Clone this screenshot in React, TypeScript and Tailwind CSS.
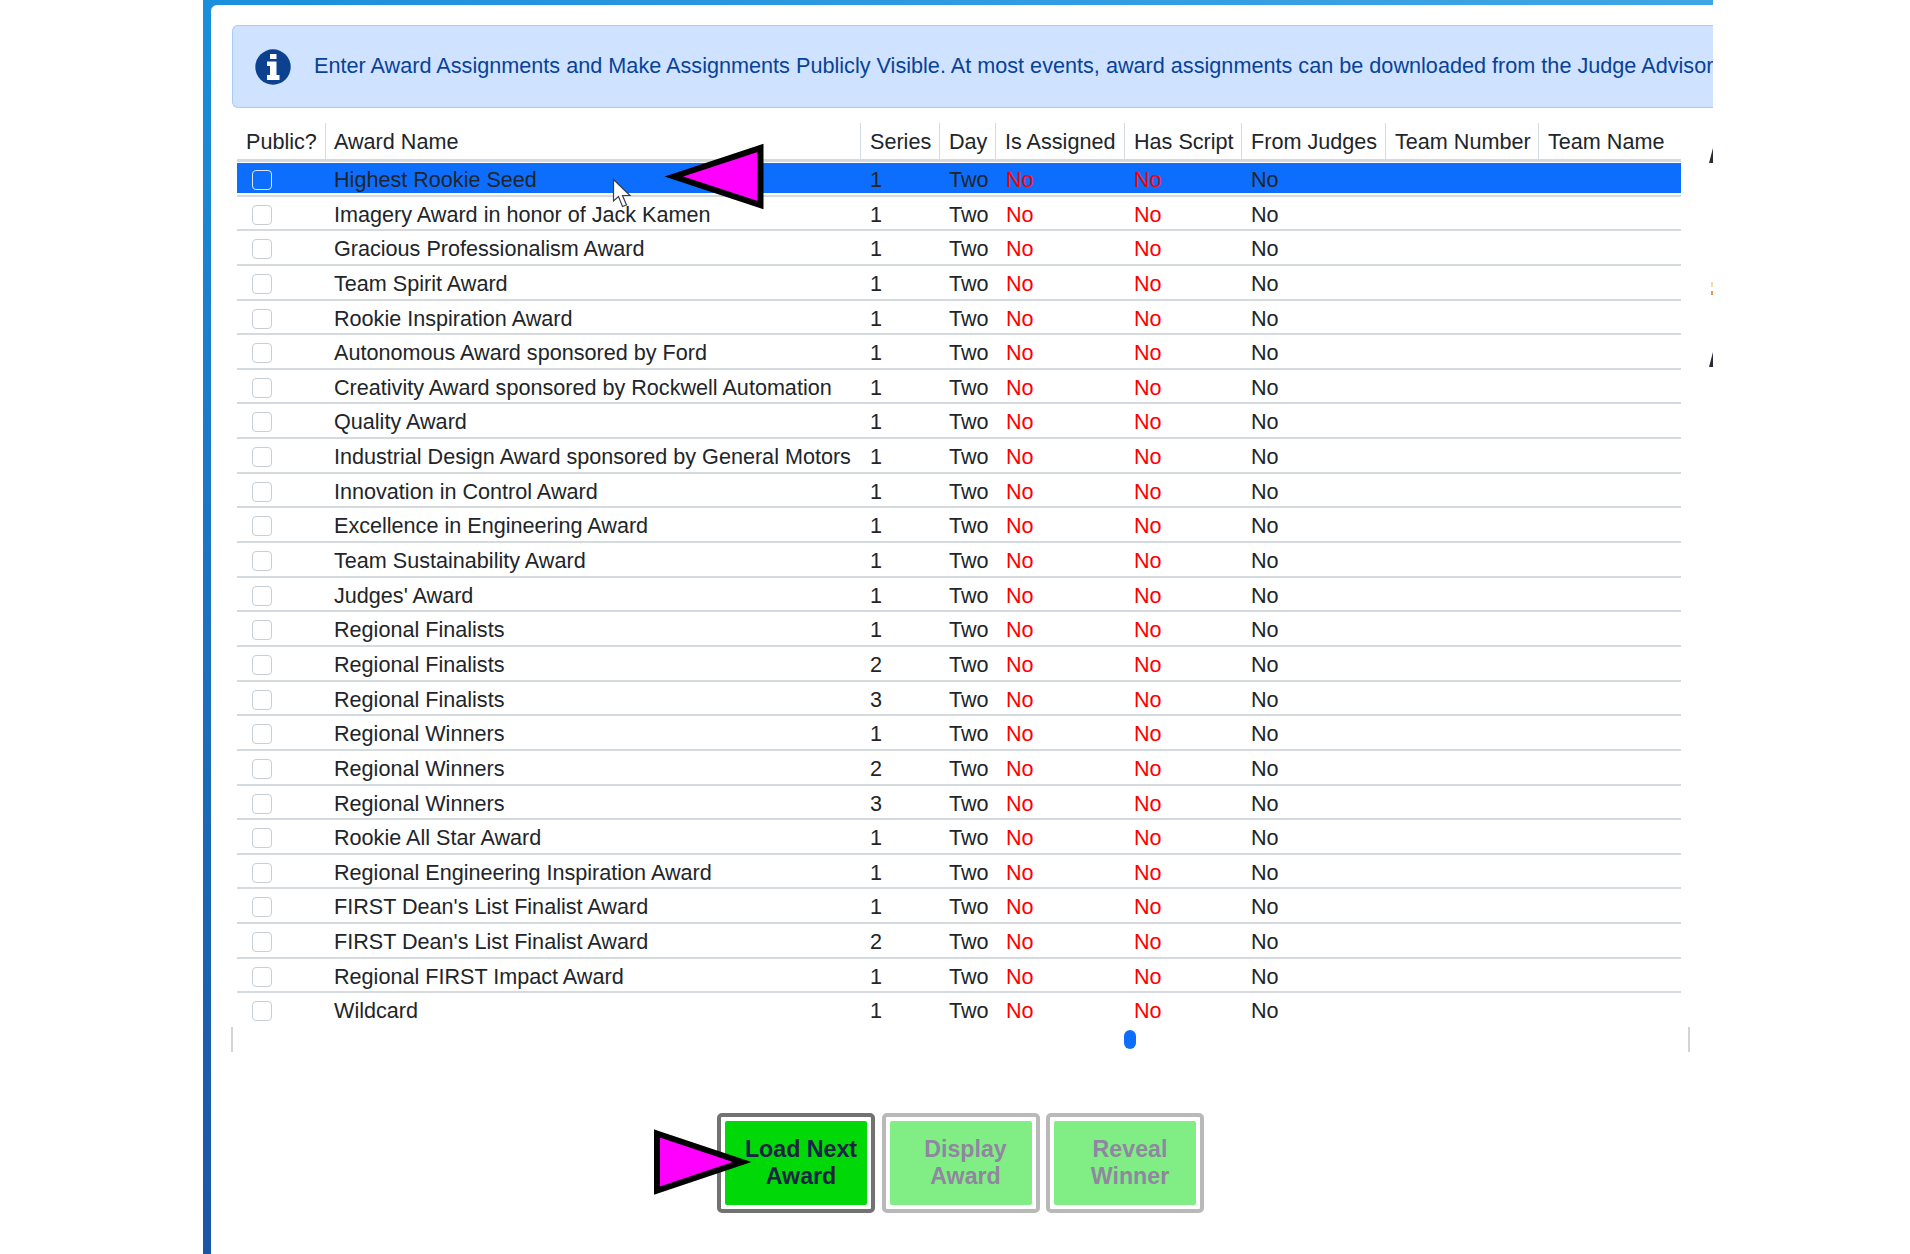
const awards: [string, number][] = [
  ['Highest Rookie Seed', 1],
  ['Imagery Award in honor of Jack Kamen', 1],
  ['Gracious Professionalism Award', 1],
  ['Team Spirit Award', 1],
  ['Rookie Inspiration Award', 1],
  ['Autonomous Award sponsored by Ford', 1],
  ['Creativity Award sponsored by Rockwell Automation', 1],
  ['Quality Award', 1],
  ['Industrial Design Award sponsored by General Motors', 1],
  ['Innovation in Control Award', 1],
  ['Excellence in Engineering Award', 1],
  ['Team Sustainability Award', 1],
  ["Judges' Award", 1],
  ['Regional Finalists', 1],
  ['Regional Finalists', 2],
  ['Regional Finalists', 3],
  ['Regional Winners', 1],
  ['Regional Winners', 2],
  ['Regional Winners', 3],
  ['Rookie All Star Award', 1],
  ['Regional Engineering Inspiration Award', 1],
  ["FIRST Dean's List Finalist Award", 1],
  ["FIRST Dean's List Finalist Award", 2],
  ['Regional FIRST Impact Award', 1],
  ['Wildcard', 1],
]

const headers = ['Public?', 'Award Name', 'Series', 'Day', 'Is Assigned', 'Has Script', 'From Judges', 'Team Number', 'Team Name']
const cols = 'grid grid-cols-[88px_535px_79px_56px_129px_117px_144px_153px_143px]'

const InfoIcon = () => (
  <svg className="w-[36px] h-[36px] shrink-0" viewBox="0 0 36 36">
    <circle cx="18" cy="18" r="17.7" fill="#0b418f" />
    <rect x="15" y="5" width="6.5" height="5" fill="#fff" />
    <path d="M12 12.5 H21.5 V26 H24.5 V31 H12 V26 H15 V17 H12 Z" fill="#fff" />
  </svg>
)

const ActionButton = ({ label, faded }: { label: string[]; faded?: boolean }) => (
  <div className={`w-[158px] h-[100px] rounded-[5px] border-[4px] bg-white p-[4px] ${faded ? 'border-[#b9b9b9]' : 'border-[#727272]'}`}>
    <div className={`h-full pl-[10px] rounded-[2px] flex flex-col items-center justify-center font-bold text-[23.2px] leading-[27px] ${faded ? 'bg-[#80ee85] text-[#91869f]' : 'bg-[#00d808] text-[#1c2445]'}`}>
      {label.map((l) => (
        <span key={l}>{l}</span>
      ))}
    </div>
  </div>
)

const App = (): JSX.Element => {
  return (
    <div className="relative w-[1910px] h-[1254px] overflow-hidden bg-white font-['Liberation_Sans',Arial,sans-serif] text-[21.6px] text-[#212529]">
      <div className="ml-[203px] w-[1510px] h-full flex flex-col bg-gradient-to-b from-[#1a8fdc] to-[#1b55a6]">
        <div className="h-[5px] shrink-0 bg-gradient-to-r from-[#1a8fdc] to-[#3fa6e5]" />
        <div className="flex-1 min-h-0 pl-[8px]">
          <div className="relative h-full bg-white rounded-tl-[6px] pl-[21px] pt-[20px] overflow-hidden">
            <div className="flex items-center h-[83px] pl-[22px] gap-[23px] bg-[#cfe2ff] border border-r-0 border-[#a9cbf8] rounded-l-[6px] text-[21.65px] text-[#084298] whitespace-nowrap overflow-hidden">
              <InfoIcon />
              <span>Enter Award Assignments and Make Assignments Publicly Visible. At most events, award assignments can be downloaded from the Judge Advisor</span>
            </div>

            <div className="w-[1444px] ml-[5px] mt-[15px]">
              <div className={`${cols} h-[39px] border-b-[3px] border-[#d3d9de]`}>
                {headers.map((h, i) => (
                  <div
                    key={h}
                    className={`flex items-center pt-[3px] whitespace-nowrap ${i > 0 ? 'border-l border-[#d5dbe0]' : ''} ${i === 0 ? 'pl-[9px]' : i === 1 ? 'pl-[8px]' : 'pl-[9px]'}`}
                  >
                    {h}
                  </div>
                ))}
              </div>

              {awards.map(([name, series], i) => (
                <div
                  key={`${name}-${series}`}
                  className={`h-[34.65px] pt-[1px] ${i < awards.length - 1 ? 'border-b-2 border-[#d5dade]' : ''}`}
                >
                  <div className={`${cols} grid-rows-[30px] h-[30px] leading-[30px] whitespace-nowrap ${i === 0 ? 'bg-[#0d6efd]' : ''}`}>
                    <div className="pl-[15px] pt-[4px] flex items-center">
                      <span className={`w-[20px] h-[20px] rounded-[4px] border ${i === 0 ? 'border-[#dbe7f7] bg-[#0d6efd]' : 'border-[#c8ced5] bg-white'}`} />
                    </div>
                    <div className="pl-[9px] pt-[2px]">{name}</div>
                    <div className="pl-[10px] pt-[2px]">{series}</div>
                    <div className="pl-[10px] pt-[2px]">Two</div>
                    <div className="pl-[11px] pt-[2px] text-[#ff0000]">No</div>
                    <div className="pl-[10px] pt-[2px] text-[#ff0000]">No</div>
                    <div className="pl-[10px] pt-[2px]">No</div>
                    <div />
                    <div />
                  </div>
                </div>
              ))}
            </div>

            <div className="flex items-center w-[1459px] h-[25px] -ml-px -mt-px border-x-2 border-[#d4d4d4]">
              <div className="w-[12px] h-[19px] ml-[891px] rounded-full bg-[#0d6efd]" />
            </div>

            <div className="flex gap-[6.5px] ml-[485px] mt-[61px]">
              <ActionButton label={['Load Next', 'Award']} />
              <ActionButton label={['Display', 'Award']} faded />
              <ActionButton label={['Reveal', 'Winner']} faded />
            </div>

            {/* clipped letters from the panel beside the table */}
            <svg className="absolute left-[1498px] top-[143px] w-[4px] h-[15px]" viewBox="0 0 4 15">
              <polygon points="0,15 4,0 4,15" fill="#2a2a38" />
            </svg>
            <svg className="absolute left-[1500px] top-[277px] w-[2px] h-[13px]" viewBox="0 0 2 13">
              <rect x="0" y="0" width="2" height="5" fill="#f4d9b0" />
              <rect x="0" y="9" width="2" height="4" fill="#e09a50" />
            </svg>
            <svg className="absolute left-[1498px] top-[347px] w-[4px] h-[15px]" viewBox="0 0 4 15">
              <polygon points="0,15 4,0 4,15" fill="#2a2a38" />
            </svg>
          </div>
        </div>
      </div>

      {/* annotation arrows and cursor on top of the screenshot */}
      <svg className="absolute left-[664px] top-[141px] w-[102px] h-[71px]" viewBox="0 0 102 71">
        <polygon points="10,35.5 96.5,7 96.5,64" fill="#ff00ff" stroke="#000" strokeWidth="6" />
      </svg>
      <svg className="absolute left-[652px] top-[1126px] w-[102px] h-[71px]" viewBox="0 0 102 71">
        <polygon points="5,7.5 90,36 5,64.5" fill="#ff00ff" stroke="#000" strokeWidth="6" />
      </svg>
      <svg className="absolute left-[612px] top-[178px] w-[20px] h-[31px]" viewBox="0 0 20 31">
        <path d="M1.5 1.5 L1.5 23 L6.5 18.5 L10.5 28.5 L14.5 27 L10.5 17.5 L18 17.5 Z" fill="#fff" stroke="#3a3f4a" strokeWidth="1.2" />
      </svg>
    </div>
  )
}

export default App
